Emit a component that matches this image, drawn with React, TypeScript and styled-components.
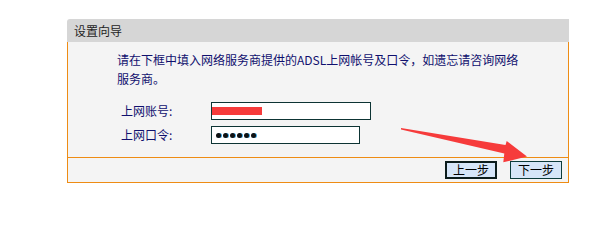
import React from "react";
import styled, { createGlobalStyle } from "styled-components";

const Global = createGlobalStyle`
  html, body { margin: 0; padding: 0; background: #ffffff; }
  body { font-family: "Noto Sans CJK SC", "DejaVu Sans", sans-serif; font-size: 12px; }
`;

const Page = styled.div`
  width: 615px;
  height: 242px;
  padding: 19px 0 0 67px;
  box-sizing: border-box;
`;

const Panel = styled.div`
  position: relative;
  width: 502px;
`;

const Header = styled.div`
  height: 23px;
  background: #d6d6d6;
  border-top-left-radius: 3px;
  display: flex;
  align-items: center;
  padding-left: 7px;
  color: #1e1e1e;
  font-size: 12px;
  line-height: 23px;
`;

const Body = styled.div`
  background: #f4f4f4;
  border: 1px solid #ee8c14;
  border-top: none;
`;

const Intro = styled.p`
  margin: 0;
  padding: 8px 0 0 49px;
  width: 402px;
  color: #10106e;
  font-size: 12px;
  line-height: 19px;
`;

const Form = styled.div`
  display: flex;
  flex-direction: column;
  gap: 6px;
  padding: 14px 0 13px 53px;
`;

const Row = styled.div`
  display: flex;
  align-items: center;
`;

const Label = styled.span`
  width: 90px;
  color: #10106e;
  font-size: 12px;
  line-height: 18px;
`;

const Field = styled.div<{ $w: number }>`
  width: ${(p) => p.$w}px;
  height: 18px;
  box-sizing: border-box;
  border: 1px solid #0d3434;
  background: #ffffff;
  display: flex;
  align-items: center;
`;

const Redaction = styled.span`
  display: block;
  width: 50px;
  height: 8px;
  background: #f63b3b;
`;

const Dots = styled.div`
  display: flex;
  gap: 2px;
  padding-left: 4px;
`;

const Dot = styled.span`
  width: 5px;
  height: 5px;
  border-radius: 50%;
  background: #111;
  box-shadow: 1px 0 0 #3aa6e6;
`;

const Footer = styled.div`
  border-top: 1px solid #ee8c14;
  height: 25px;
  display: flex;
  justify-content: flex-end;
  align-items: flex-start;
  gap: 13px;
  padding: 3px 6px 0 0;
  box-sizing: border-box;
`;

const Button = styled.button<{ $focused?: boolean }>`
  width: 52px;
  height: 18px;
  box-sizing: border-box;
  padding: 0;
  margin: 0;
  background: #d6e5f8;
  border: ${(p) => (p.$focused ? "2px solid #0c1c1c" : "1px solid #0d3b3b")};
  color: #000;
  font-family: "Noto Sans CJK SC", "DejaVu Sans", sans-serif;
  font-size: 12px;
  line-height: 14px;
  cursor: pointer;
`;

const Arrow = styled.svg`
  position: absolute;
  left: 0;
  top: 0;
  pointer-events: none;
  overflow: visible;
`;

export default function App() {
  return (
    <>
      <Global />
      <Page>
        <Panel>
          <Header>设置向导</Header>
          <Body>
            <Intro>
              请在下框中填入网络服务商提供的ADSL上网帐号及口令，如遗忘请咨询网络服务商。
            </Intro>
            <Form>
              <Row>
                <Label>上网账号:</Label>
                <Field $w={160}>
                  <Redaction />
                </Field>
              </Row>
              <Row>
                <Label>上网口令:</Label>
                <Field $w={149}>
                  <Dots>
                    {Array.from({ length: 6 }).map((_, i) => (
                      <Dot key={i} />
                    ))}
                  </Dots>
                </Field>
              </Row>
            </Form>
            <Footer>
              <Button $focused>上一步</Button>
              <Button>下一步</Button>
            </Footer>
          </Body>
          <Arrow width="502" height="170" viewBox="0 0 502 170">
            <polygon
              points="334,109 438.5,126 439.7,122 460,137.5 436.3,143.3 437.3,134.5 334,110.5"
              fill="#f63b3b"
            />
          </Arrow>
        </Panel>
      </Page>
    </>
  );
}
